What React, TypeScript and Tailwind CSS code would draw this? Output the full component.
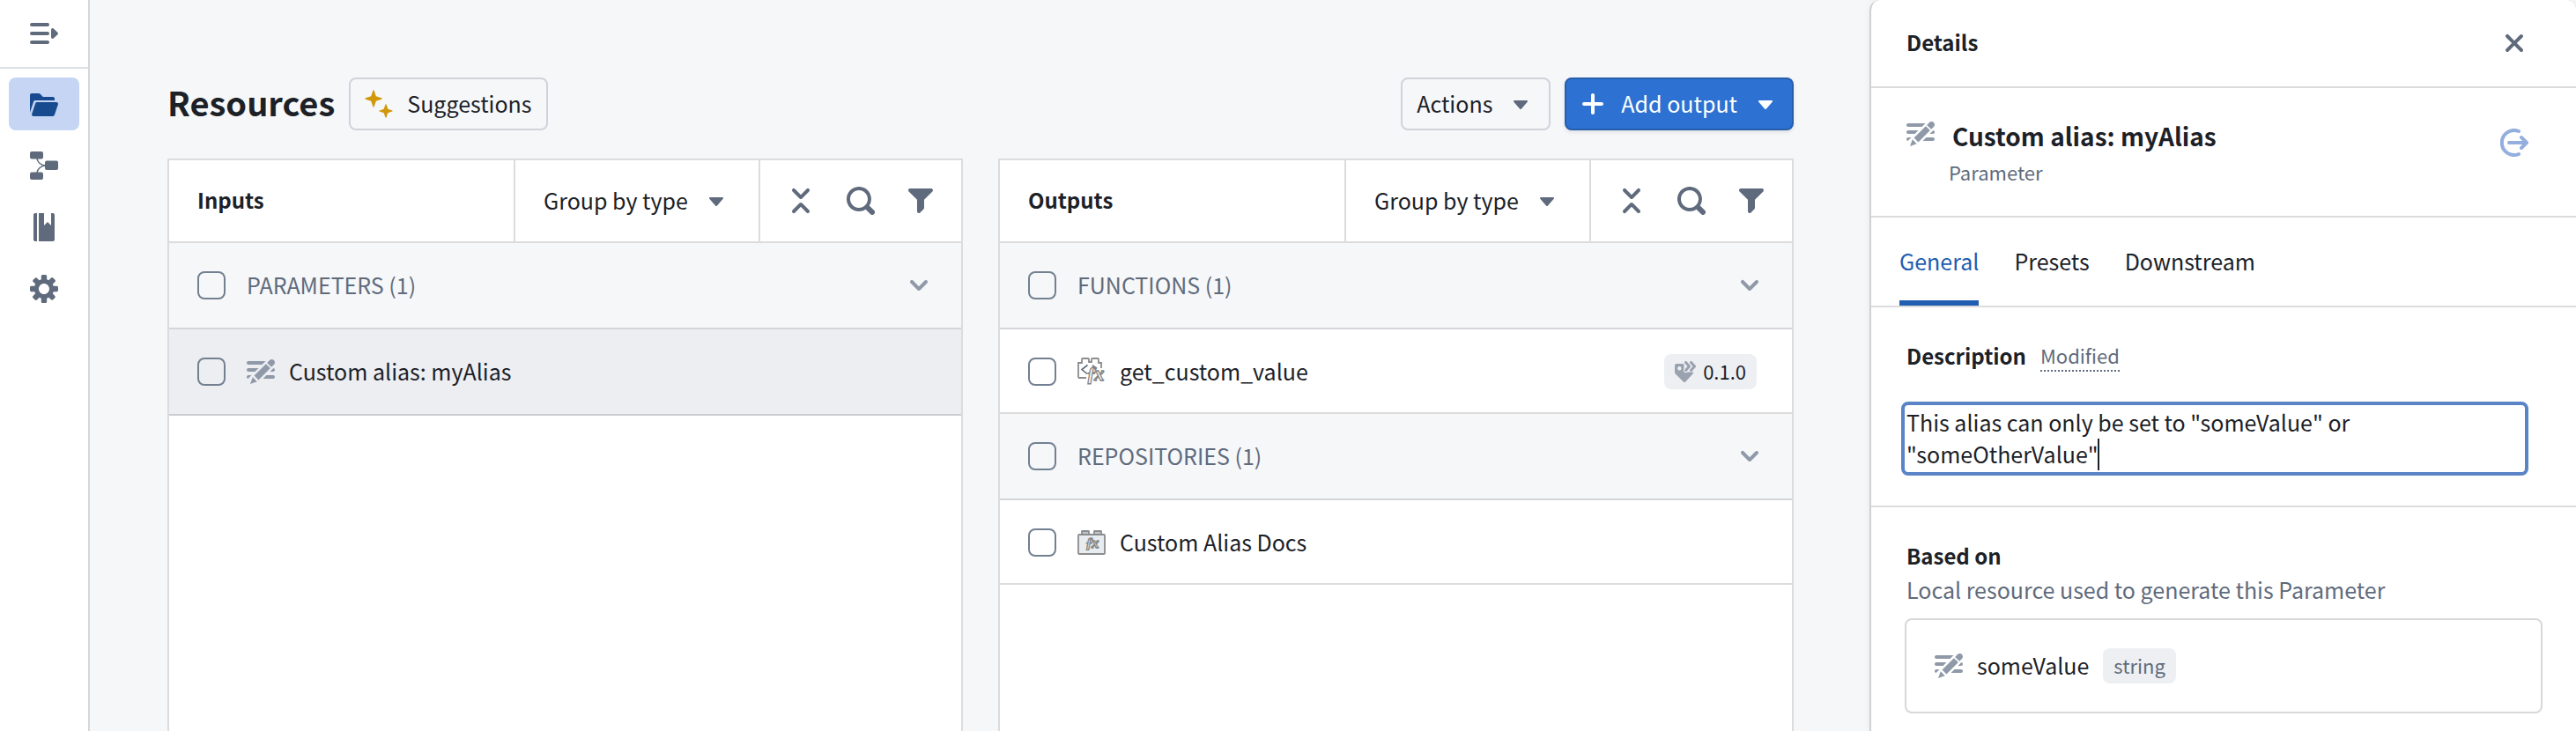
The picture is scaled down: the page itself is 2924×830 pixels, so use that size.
import type { ReactNode } from "react";

const icons = {
  folderOpen:
    "M2.06 6.69c.14-.4.5-.69.94-.69h11V5c0-.55-.45-1-1-1H7.41l-1.7-1.71A.997.997 0 005 2H1c-.55 0-1 .45-1 1v9.84l2.05-6.15h.01zM16 8c0-.55-.45-1-1-1H4a.99.99 0 00-.94.69l-1.99 6C1.03 13.79 1 13.89 1 14c0 .55.45 1 1 1h11c.44 0 .81-.29.94-.69l2-6c.04-.1.06-.2.06-.31z",
  cog: "M15.19 6.39h-1.85c-.11-.37-.27-.71-.45-1.04l1.36-1.36c.31-.31.31-.82 0-1.13l-1.13-1.13a.803.803 0 00-1.13 0l-1.36 1.36c-.33-.17-.67-.33-1.04-.44V.79c0-.44-.36-.8-.8-.8h-1.6c-.44 0-.8.36-.8.8v1.86c-.39.12-.75.28-1.1.47l-1.3-1.3c-.3-.3-.79-.3-1.09 0L1.82 2.91c-.3.3-.3.79 0 1.09l1.3 1.3c-.2.34-.36.7-.48 1.09H.79c-.44 0-.8.36-.8.8v1.6c0 .44.36.8.8.8h1.85c.11.37.27.71.45 1.04l-1.36 1.36c-.31.31-.31.82 0 1.13l1.13 1.13c.31.31.82.31 1.13 0l1.36-1.36c.33.18.67.33 1.04.44v1.86c0 .44.36.8.8.8h1.6c.44 0 .8-.36.8-.8v-1.86c.39-.12.75-.28 1.1-.47l1.3 1.3c.3.3.79.3 1.09 0l1.09-1.09c.3-.3.3-.79 0-1.09l-1.3-1.3c.19-.35.36-.71.48-1.1h1.85c.44 0 .8-.36.8-.8v-1.6a.816.816 0 00-.81-.79zm-7.2 4.6c-1.66 0-3-1.34-3-3s1.34-3 3-3 3 1.34 3 3-1.34 3-3 3z",
  caretDown:
    "M12 6.5c0-.28-.22-.5-.5-.5h-7a.495.495 0 00-.37.83l3.5 4c.09.1.22.17.37.17s.28-.07.37-.17l3.5-4c.08-.09.13-.2.13-.33z",
  plus: "M13 7H9V3c0-.55-.45-1-1-1s-1 .45-1 1v4H3c-.55 0-1 .45-1 1s.45 1 1 1h4v4c0 .55.45 1 1 1s1-.45 1-1V9h4c.55 0 1-.45 1-1s-.45-1-1-1z",
  collapseAll:
    "M7.29 6.71c.18.18.43.29.71.29s.53-.11.71-.29l4-4a1.003 1.003 0 00-1.42-1.42L8 4.59l-3.29-3.3a1.003 1.003 0 00-1.42 1.42l4 4zm1.42 2.58C8.53 9.11 8.28 9 8 9s-.53.11-.71.29l-4 4a1.003 1.003 0 001.42 1.42L8 11.41l3.29 3.29c.18.19.43.3.71.3a1.003 1.003 0 00.71-1.71l-4-4z",
  search:
    "M15.55 13.43l-2.67-2.68a6.94 6.94 0 001.11-3.76c0-3.87-3.13-7-7-7s-7 3.13-7 7 3.13 7 7 7c1.39 0 2.68-.42 3.76-1.11l2.68 2.67a1.498 1.498 0 102.12-2.12zm-8.56-1.44c-2.76 0-5-2.24-5-5s2.24-5 5-5 5 2.24 5 5-2.24 5-5 5z",
  filter:
    "M13.99.99h-12a1.003 1.003 0 00-.71 1.71l4.71 4.71V14a1.003 1.003 0 001.71.71l2-2c.18-.18.29-.43.29-.71V7.41L14.7 2.7a1.003 1.003 0 00-.71-1.71z",
  chevronDown:
    "M12 5c-.28 0-.53.11-.71.29L8 8.59l-3.29-3.3a1.003 1.003 0 00-1.42 1.42l4 4c.18.18.43.29.71.29s.53-.11.71-.29l4-4A1.003 1.003 0 0012 5z",
  cross:
    "M9.41 8l3.29-3.29c.19-.18.3-.43.3-.71a1.003 1.003 0 00-1.71-.71L8 6.59l-3.29-3.3a1.003 1.003 0 00-1.42 1.42L6.59 8 3.3 11.29c-.19.18-.3.43-.3.71a1.003 1.003 0 001.71.71L8 9.41l3.29 3.29c.18.19.43.3.71.3a1.003 1.003 0 00.71-1.71L9.41 8z",
  parameter:
    "M1 8h3.76l2-2H1c-.55 0-1 .45-1 1s.45 1 1 1zm14.49-4.01c.31-.32.51-.76.51-1.24C16 1.78 15.22 1 14.25 1c-.48 0-.92.2-1.24.51l-1.44 1.44 2.47 2.47 1.45-1.43zM1 4h7.76l2-2H1c-.55 0-1 .45-1 1s.45 1 1 1zm0 6c-.55 0-1 .45-1 1 0 .48.35.86.8.96L2.76 10H1zm9.95-6.43l-6.69 6.69 2.47 2.47 6.69-6.69-2.47-2.47zm4.25 2.47L13.24 8H15c.55 0 1-.45 1-1 0-.48-.35-.86-.8-.96zM2 15l3.86-1.39-2.46-2.44L2 15zm13-5h-3.76l-2 2H15c.55 0 1-.45 1-1s-.45-1-1-1z",
};

function Icon({ name, className = "text-[#5f6b7c]" }: { name: keyof typeof icons; className?: string }) {
  return (
    <svg viewBox="0 0 16 16" fill="currentColor" className={`size-8 shrink-0 ${className}`} aria-hidden="true">
      <path fillRule="evenodd" d={icons[name]} />
    </svg>
  );
}

function MenuClosedIcon() {
  return (
    <svg viewBox="0 0 32 32" fill="currentColor" className="size-8" aria-hidden="true">
      <rect x="0" y="4" width="22" height="4" rx="2" />
      <rect x="0" y="14" width="22" height="4" rx="2" />
      <rect x="0" y="24" width="22" height="4" rx="2" />
      <path d="M24 12c0-1.700 1.600-2.500 2.800-1.500l4.500 4.200c.9.800.9 1.800 0 2.600l-4.500 4.200C25.600 22.500 24 21.700 24 20z" />
    </svg>
  );
}

function LineageIcon() {
  return (
    <svg viewBox="0 0 32 32" fill="currentColor" className="size-8" aria-hidden="true">
      <rect x="0" y="0" width="15" height="8.500" rx="2" />
      <rect x="17" y="10.500" width="15" height="10.500" rx="2" />
      <rect x="0" y="23.500" width="15" height="8.500" rx="2" />
      <path d="M8 8c.5 4 4.500 8 10 8M8 24c.5-4 4.500-8 10-8" fill="none" stroke="currentColor" strokeWidth="1.600" />
    </svg>
  );
}

function ManualIcon() {
  return (
    <svg viewBox="0 0 32 32" fill="currentColor" className="size-8" aria-hidden="true">
      <path d="M6 0h2v32H6a2 2 0 01-2-2V2a2 2 0 012-2z" />
      <path d="M10 0h6v14l4-4 4 4V0h2a2 2 0 012 2v28a2 2 0 01-2 2H10z" />
    </svg>
  );
}

function SparklesIcon() {
  return (
    <svg viewBox="0 0 32 32" fill="#d1980b" className="size-8" aria-hidden="true">
      <path d="M10 0.300c.4 0 .6.300.7.600L12.800 7.200l6.300 2.100c.7.300.7 1.100 0 1.400l-6.300 2.100-2.100 6.300c-.3.700-1.100.7-1.400 0L7.200 12.800.9 10.700c-.7-.3-.7-1.100 0-1.400L7.200 7.200 9.300.9c.1-.3.3-.6.7-.6z" />
      <path d="M24 16.300c.3 0 .5.200.6.500l1.700 4.900 4.900 1.700c.6.200.6 1 0 1.200l-4.900 1.700-1.700 4.900c-.2.600-1 .6-1.200 0l-1.700-4.900-4.900-1.700c-.6-.2-.6-1 0-1.200l4.900-1.700 1.700-4.900c.1-.3.300-.5.600-.5z" />
    </svg>
  );
}

function FunctionIcon() {
  return (
    <svg viewBox="0 0 32 32" fill="none" className="size-8 shrink-0" aria-hidden="true">
      <path d="M10 23H2a1 1 0 01-1-1V6h4V2a1 1 0 011-1h6a1 1 0 011 1v3h3V2a1 1 0 011-1h6a1 1 0 011 1v4h3v6" stroke="#8c8c8c" strokeWidth="1.800" />
      <path d="M11.500 8.500L5 13.500l6 5M17 9l5 3.500" stroke="#5f6b7c" strokeWidth="1.600" />
      <text x="10" y="26" fontFamily="Liberation Serif, serif" fontStyle="italic" fontWeight="700" fontSize="23" fill="#fff" stroke="#858585" strokeWidth="1.300">
        ƒ
        <tspan x="19">x</tspan>
      </text>
    </svg>
  );
}

function RepositoryIcon() {
  return (
    <svg viewBox="0 0 32 32" className="size-8 shrink-0" aria-hidden="true">
      <path d="M5 7V3.500a.5.500 0 01.5-.5h7a.5.500 0 01.5.500V7M19 7V3.500a.5.500 0 01.5-.5h7a.5.500 0 01.5.500V7" fill="#b9c5d2" stroke="#8c8c8c" strokeWidth="1.800" />
      <rect x="1" y="7" width="30" height="22" rx="1" fill="#e7ecf0" stroke="#8c8c8c" strokeWidth="1.800" />
      <text x="9" y="22" fontFamily="Liberation Serif, serif" fontStyle="italic" fontWeight="700" fontSize="17" fill="#e7ecf0" stroke="#858585" strokeWidth="1.300">
        ƒ
        <tspan x="16">x</tspan>
      </text>
    </svg>
  );
}

function VersionIcon() {
  return (
    <svg viewBox="0 0 24 24" className="size-6 shrink-0" aria-hidden="true">
      <path
        fill="#9aa1af"
        fillRule="evenodd"
        d="M0 5c0-1.100.9-2 2-2h6.500c1 0 1.500.4 2 1v8.500h10.300c.5.600.4 1.200-.1 1.700l-8.500 9.200c-.7.700-1.700.7-2.400 0l-9-9C.3 13.900 0 13.500 0 12.800zm5.300 1a2.200 2.200 0 100 4.400 2.200 2.200 0 000-4.400z"
      />
      <path d="M12.500 1.500l4 4.500-4 4.500" fill="none" stroke="#edeff2" strokeWidth="5" strokeLinecap="round" />
      <path d="M12.500 1.500l4 4.500-4 4.500M18.500 1.500l4 4.500-4 4.500" fill="none" stroke="#9aa1af" strokeWidth="3" strokeLinecap="round" strokeLinejoin="round" />
    </svg>
  );
}

function OpenIcon() {
  return (
    <svg viewBox="0 0 32 32" fill="none" stroke="currentColor" strokeLinecap="round" strokeLinejoin="round" className="size-8" aria-hidden="true">
      <path d="M21 3A14 14 0 1021 29" strokeWidth="4" />
      <path d="M10 16h18M24 10l6 6-6 6" strokeWidth="4" />
    </svg>
  );
}

function NavButton({ label, active, children }: { label: string; active?: boolean; children: ReactNode }) {
  return (
    <button
      aria-label={label}
      className={`flex h-[60px] w-20 items-center justify-center rounded-lg ${active ? "bg-[#c5d5f3] text-[#184a90]" : "text-[#5f6b7c]"}`}
    >
      {children}
    </button>
  );
}

function Sidebar() {
  return (
    <aside className="w-[102px] shrink-0 border-r-2 border-[#d3d8de] bg-white">
      <div className="flex h-[78px] items-center justify-center border-b-2 border-[#dce0e5]">
        <button aria-label="Expand menu" className="text-[#5f6b7c]">
          <MenuClosedIcon />
        </button>
      </div>
      <nav className="flex flex-col items-center gap-2.5 pt-2.5">
        <NavButton label="Resources" active>
          <Icon name="folderOpen" className="text-[#184a90]" />
        </NavButton>
        <NavButton label="Lineage">
          <LineageIcon />
        </NavButton>
        <NavButton label="Documentation">
          <ManualIcon />
        </NavButton>
        <NavButton label="Settings">
          <Icon name="cog" />
        </NavButton>
      </nav>
    </aside>
  );
}

function Checkbox({ id }: { id: string }) {
  return (
    <input
      id={id}
      type="checkbox"
      className="mr-6 size-8 shrink-0 appearance-none rounded-lg border-2 border-[#738091] checked:bg-[#2d72d2]"
    />
  );
}

function GroupRow({ id, label }: { id: string; label: string }) {
  return (
    <li className="flex h-[98px] items-center border-b-2 border-[#d3d5d8] bg-[#f6f7f9] px-8">
      <Checkbox id={id} />
      <label htmlFor={id} className="flex-1 pb-0.5 text-[#5f6b7c]">
        {label}
      </label>
      <button aria-label={`Collapse ${label}`}>
        <Icon name="chevronDown" className="text-[#8f99a8]" />
      </button>
    </li>
  );
}

type ItemProps = { id: string; label: string; icon: ReactNode; version?: string; selected?: boolean };

function ItemRow({ id, label, icon, version, selected }: ItemProps) {
  return (
    <li
      className={`flex items-center border-b-2 pr-10 pl-8 ${selected ? "h-[98px] border-[#cbccd1] bg-[#edeef2]" : "h-24 border-[#dcdcdd] pt-0.5"}`}
    >
      <Checkbox id={id} />
      {icon}
      <label htmlFor={id} className="ml-4 flex-1 pb-0.5">
        {label}
      </label>
      {version && (
        <span className="flex h-10 items-center gap-2 rounded-lg bg-[#edeff2] px-3 text-[22px]">
          <VersionIcon />
          <span className="pb-0.5">{version}</span>
        </span>
      )}
    </li>
  );
}

function ResourcePanel({ title, children }: { title: string; children: ReactNode }) {
  return (
    <section className="flex flex-1 flex-col border-2 border-b-0 border-[#dcdcdd] bg-white">
      <header className="flex h-[94px] border-b-2 border-[#dcdcdd]">
        <h2 className="flex flex-1 items-center pb-0.5 pl-8 text-2xl font-bold">{title}</h2>
        <div className="relative flex items-center border-l-2 border-[#dcdcdd]">
          <select aria-label={`${title} grouping`} className="h-full appearance-none bg-transparent pr-20 pb-0.5 pl-8">
            <option>Group by type</option>
          </select>
          <span className="pointer-events-none absolute right-8">
            <Icon name="caretDown" />
          </span>
        </div>
        <div className="flex items-center gap-9 border-l-2 border-[#dcdcdd] px-[30px]">
          <button aria-label="Collapse all">
            <Icon name="collapseAll" />
          </button>
          <button aria-label="Search">
            <Icon name="search" />
          </button>
          <button aria-label="Filter">
            <Icon name="filter" />
          </button>
        </div>
      </header>
      <ul>{children}</ul>
    </section>
  );
}

function Details() {
  return (
    <aside className="w-[802px] shrink-0 rounded-t-xl border-l-2 border-[#cfd0d2] bg-white shadow-[0_0_8px_rgba(17,20,24,0.06)]">
      <header className="flex h-[100px] items-center justify-between border-b-2 border-[#dcdcdd] pr-[54px] pl-10">
        <h2 className="pb-0.5 text-2xl leading-9 font-bold">Details</h2>
        <button aria-label="Close">
          <Icon name="cross" />
        </button>
      </header>

      <div className="flex items-start justify-between border-b-2 border-[#dcdcdd] pt-9 pr-[54px] pb-[35px] pl-10">
        <div>
          <div className="flex gap-5">
            <Icon name="parameter" className="text-[#8f99a8]" />
            <h3 className="text-[28px] leading-9 font-bold">Custom alias: myAlias</h3>
          </div>
          <p className="mt-2 pl-12 text-[22px] leading-[30px] text-[#5f6b7c]">Parameter</p>
        </div>
        <button aria-label="Open resource" className="mt-2.5 text-[#94aede]">
          <OpenIcon />
        </button>
      </div>

      <nav className="flex h-[102px] gap-10 border-b-2 border-[#dcdcdd] pl-8">
        <button className="border-b-6 border-[#215db0] pt-1 text-[#215db0]">General</button>
        <button className="border-b-6 border-transparent pt-1">Presets</button>
        <button className="border-b-6 border-transparent pt-1">Downstream</button>
      </nav>

      <div className="border-b-2 border-[#dcdcdd] pt-[37px] pr-[54px] pb-[34px] pl-[34px]">
        <div className="flex gap-4 pl-1.5">
          <label htmlFor="description" className="text-2xl leading-9 font-bold">
            Description
          </label>
          <span className="border-b-2 border-dotted border-[#5f6b7c] text-[22px] leading-[34px] text-[#5f6b7c]">Modified</span>
        </div>
        <div className="relative mt-[34px]">
          <textarea
            id="description"
            rows={2}
            className="block w-full resize-none overflow-hidden rounded-lg border-4 border-[#5a84c5] px-0.5 pt-px pb-[3px] outline-none"
            defaultValue={'This alias can only be set to "someValue" or\n"someOtherValue"'}
          />
          {/* text cursor */}
          <span className="absolute top-[42px] left-[223px] h-9 w-0.5 bg-[#1c2127]" />
        </div>
      </div>

      <div className="px-[38px] pt-9 pb-5">
        <h3 className="pl-0.5 text-2xl leading-[38px] font-bold">Based on</h3>
        <p className="pl-0.5 leading-[38px] text-[#5f6b7c]">Local resource used to generate this Parameter</p>
        <div className="mt-3.5 flex h-[108px] items-center gap-4 rounded-lg border-2 border-[#d8d8da] px-8">
          <Icon name="parameter" className="text-[#8f99a8]" />
          <span className="pb-0.5">someValue</span>
          <span className="flex h-10 items-center rounded-lg bg-[#edeff2] px-3 pb-0.5 text-[22px] text-[#5f6b7c]">string</span>
        </div>
      </div>
    </aside>
  );
}

export default function App() {
  return (
    <div className="flex min-h-screen bg-[#f6f7f9] font-['Noto_Sans_CJK_SC',sans-serif] text-[25px] leading-9 text-[#1c2127]">
      <Sidebar />

      <main className="flex flex-1 flex-col gap-8 pt-[88px] pr-[86px] pl-[88px]">
        <div className="flex items-center gap-4">
          <h1 className="pb-1 text-[38px] leading-[56px] font-bold">Resources</h1>
          <button className="flex h-[60px] items-center gap-4 rounded-lg border-2 border-[#d1d3da] px-4">
            <SparklesIcon />
            <span className="pb-0.5">Suggestions</span>
          </button>
          <button className="ml-auto flex h-[60px] items-center gap-4 rounded-lg border-2 border-[#d1d3da] px-4">
            <span className="pb-0.5">Actions</span>
            <Icon name="caretDown" />
          </button>
          <button className="flex h-[60px] items-center gap-4 rounded-lg bg-[#2d72d2] px-4 text-white shadow-[inset_0_0_0_2px_rgba(17,20,24,0.2),0_2px_4px_rgba(17,20,24,0.1)]">
            <Icon name="plus" className="text-white" />
            <span className="pb-0.5">Add output</span>
            <Icon name="caretDown" className="text-white" />
          </button>
        </div>

        <div className="flex flex-1 gap-10">
          <ResourcePanel title="Inputs">
            <GroupRow id="parameters" label="PARAMETERS (1)" />
            <ItemRow id="my-alias" label="Custom alias: myAlias" icon={<Icon name="parameter" className="text-[#8f99a8]" />} selected />
          </ResourcePanel>
          <ResourcePanel title="Outputs">
            <GroupRow id="functions" label="FUNCTIONS (1)" />
            <ItemRow id="get-custom-value" label="get_custom_value" icon={<FunctionIcon />} version="0.1.0" />
            <GroupRow id="repositories" label="REPOSITORIES (1)" />
            <ItemRow id="alias-docs" label="Custom Alias Docs" icon={<RepositoryIcon />} />
          </ResourcePanel>
        </div>
      </main>

      <Details />
    </div>
  );
}
